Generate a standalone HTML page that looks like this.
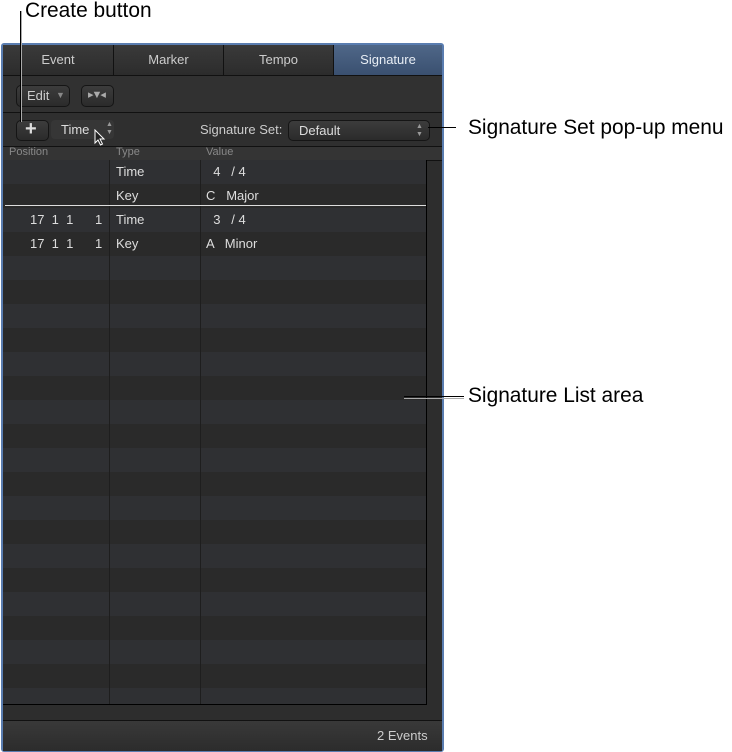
<!DOCTYPE html>
<html><head><style>
body{margin:0;width:732px;height:752px;background:#fff;position:relative;font-family:"Liberation Sans",sans-serif;overflow:hidden}
.a{position:absolute}
.lbl{font-size:20.9px;color:#000}
#panel{left:1px;top:43px;width:439px;height:705px;border:2px solid #5a7db0;border-radius:3px;background:#2d2d2d}
.tab{top:0;height:30px;line-height:30px;text-align:center;color:#ccc;font-size:13px;background:linear-gradient(#3a3a3a,#2c2c2c);border-right:1px solid #111;border-bottom:1px solid #111}
.t{font-size:13px;color:#ddd}
.btn{border:1px solid #151515;border-radius:5px;background:linear-gradient(#3c3c3c,#2b2b2b);height:20px}
.hd{font-size:11px;color:#888}
</style></head><body>
<div class="a lbl" style="left:25px;top:-1px">Create button</div>
<div class="a" id="panel">
 <div class="a tab" style="left:0;width:110px">Event</div>
 <div class="a tab" style="left:111px;width:109px">Marker</div>
 <div class="a tab" style="left:221px;width:109px">Tempo</div>
 <div class="a tab" style="left:331px;width:108px;background:linear-gradient(#4f6788,#3a5070);color:#e8eef5;border-right:none">Signature</div>
 <div class="a" style="left:0;top:31px;width:439px;height:36px;background:#313131;border-bottom:1px solid #111"></div>
 <div class="a btn" style="left:13px;top:40px;width:52px"><span class="t" style="position:absolute;left:10px;top:2px;color:#ccc">Edit</span><span style="position:absolute;left:39px;top:4px;font-size:9px;color:#888">▼</span></div>
 <div class="a btn" style="left:78px;top:40px;width:31px"><span style="position:absolute;left:6px;top:2px;font-size:11px;color:#aaa;letter-spacing:-2px">▸▼◂</span></div>
 <div class="a" style="left:0;top:68px;width:439px;height:33px;background:#2f2f2f"></div>
 <div class="a btn" style="left:13px;top:75px;width:31px;height:19px"><span style="position:absolute;left:8px;top:-3px;font-size:20px;font-weight:bold;color:#ddd">+</span></div>
 <div class="a" style="left:48px;top:75px;width:63px;height:19px;border-radius:4px;background:#363636"><span class="t" style="position:absolute;left:10px;top:2px">Time</span><span style="position:absolute;left:55px;top:1px;font-size:7px;color:#999;line-height:8px">▲<br>▼</span></div>
 <svg class="a" style="left:91px;top:84px" width="12" height="18" viewBox="0 0 12 18"><path d="M1 1 L1 14 L4 11 L6.5 16 L8.5 15 L6 10 L10 10 Z" fill="#222" stroke="#fff" stroke-width="1"/></svg>
 <div class="a t" style="left:197px;top:77px;color:#ccc">Signature Set:</div>
 <div class="a btn" style="left:285px;top:75px;width:140px;height:19px"><span class="t" style="position:absolute;left:10px;top:2px">Default</span><span style="position:absolute;left:127px;top:2px;font-size:7px;color:#999;line-height:8px">▲<br>▼</span></div>
 <div class="a" style="left:0;top:101px;width:439px;height:13px;background:#343434;border-top:1px solid #111;border-bottom:1px solid #111"></div>
 <div class="a hd" style="left:6px;top:101px">Position</div>
 <div class="a hd" style="left:113px;top:101px">Type</div>
 <div class="a hd" style="left:203px;top:101px">Value</div>
 <div class="a" style="left:0;top:115px;width:423px;height:544px;border-right:1px solid #000;border-bottom:1px solid #000;background:repeating-linear-gradient(#2f3033 0 24px,#2a2a2a 24px 48px)"></div>
 <div class="a" style="left:106px;top:115px;width:1px;height:544px;background:#1e1e1e"></div>
 <div class="a" style="left:197px;top:115px;width:1px;height:544px;background:#1e1e1e"></div>
 <div class="a" style="left:2px;top:160px;width:421px;height:1px;background:#ddd"></div>
 <div class="a t" style="left:113px;top:119px">Time</div>
 <div class="a t" style="left:203px;top:119px;white-space:pre">  4   / 4</div>
 <div class="a t" style="left:113px;top:143px">Key</div>
 <div class="a t" style="left:203px;top:143px;white-space:pre">C   Major</div>
 <div class="a t" style="left:27px;top:167px;white-space:pre">17  1  1      1</div>
 <div class="a t" style="left:113px;top:167px">Time</div>
 <div class="a t" style="left:203px;top:167px;white-space:pre">  3   / 4</div>
 <div class="a t" style="left:27px;top:191px;white-space:pre">17  1  1      1</div>
 <div class="a t" style="left:113px;top:191px">Key</div>
 <div class="a t" style="left:203px;top:191px;white-space:pre">A   Minor</div>
 <div class="a" style="left:0;top:675px;width:439px;height:30px;background:linear-gradient(#393939,#2c2c2c);border-top:1px solid #111"></div>
 <div class="a t" style="left:374px;top:683px;color:#ccc">2 Events</div>
</div>
<div class="a" style="left:20px;top:11px;width:1px;height:111px;background:#000"></div>
<div class="a" style="left:21px;top:11px;width:1px;height:111px;background:#aaa"></div>
<div class="a" style="left:428px;top:127px;width:28px;height:1px;background:#000"></div>
<div class="a lbl" style="left:468px;top:116px">Signature Set pop-up menu</div>
<div class="a" style="left:404px;top:396px;width:60px;height:1px;background:#000"></div>
<div class="a" style="left:404px;top:398px;width:60px;height:1px;background:#aaa"></div>
<div class="a lbl" style="left:468px;top:384px">Signature List area</div>
</body></html>
